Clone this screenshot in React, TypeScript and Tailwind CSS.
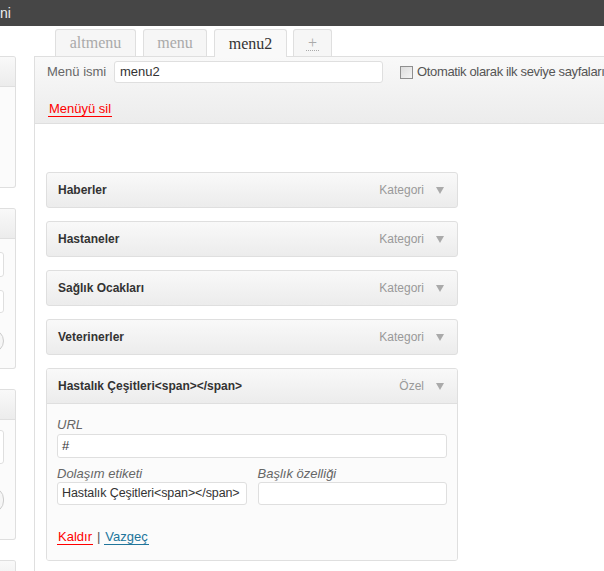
import React from "react";

const sans = { fontFamily: '"Liberation Sans", Arial, sans-serif' };
const serif = { fontFamily: '"Liberation Serif", Georgia, serif' };

const tabs = [
  { label: "altmenu", w: "w-[81px]", active: false },
  { label: "menu", w: "w-[64px]", active: false },
  { label: "menu2", w: "w-[73px]", active: true },
];

const items = ["Haberler", "Hastaneler", "Sağlık Ocakları", "Veterinerler"];

function Arrow() {
  return (
    <svg width="8" height="7" viewBox="0 0 8 7" className="ml-[12px] shrink-0">
      <path d="M0 0h8L4 7z" fill="#aaaaaa" />
    </svg>
  );
}

function ItemRow({ title, type }: { title: string; type: string }) {
  return (
    <div className="h-[36px] mb-[13px] border border-[#dfdfdf] rounded-[3px] bg-gradient-to-b from-[#f9f9f9] to-[#ececec] flex items-center pl-[11px] pr-[13px]">
      <span className="text-[12px] font-bold text-[#333]">{title}</span>
      <span className="ml-auto text-[12px] text-[#999]">{type}</span>
      <Arrow />
    </div>
  );
}

function SidePanel({ h, children }: { h: string; children?: React.ReactNode }) {
  return (
    <div className={`${h} mb-[20px] border-y border-r border-[#dfdfdf] rounded-r-[3px] bg-[#fbfbfb] overflow-hidden`}>
      <div className="h-[30px] border-b border-[#dfdfdf] bg-gradient-to-b from-[#f9f9f9] to-[#ececec]" />
      {children}
    </div>
  );
}

export default function App() {
  return (
    <div className="w-[604px] h-[571px] overflow-hidden bg-white relative" style={sans}>
      {/* admin bar */}
      <div className="h-[26px] bg-[#464646] flex items-center text-[14px] text-[#eeeeee] leading-none">
        <span className="-mt-[1px]">ni</span>
      </div>

      <div className="flex">
        {/* left column, mostly scrolled off */}
        <div className="w-[16px] shrink-0 pt-[30px]">
          <SidePanel h="h-[132px]" />
          <SidePanel h="h-[161px]">
            <div className="pt-[13px] flex flex-col">
              <div className="-ml-[17px] w-[21px] h-[25px] border border-[#dfdfdf] rounded-[3px] bg-white" />
              <div className="mt-[13px] -ml-[17px] w-[21px] h-[23px] border border-[#dfdfdf] rounded-[3px] bg-white" />
              <div className="mt-[16px] -ml-[20px] w-[24px] h-[24px] border border-[#cccccc] rounded-full bg-[#f6f6f6]" />
            </div>
          </SidePanel>
          <SidePanel h="h-[151px]">
            <div className="pt-[10px] flex flex-col">
              <div className="-ml-[17px] w-[21px] h-[34px] border border-[#dfdfdf] rounded-[3px] bg-white" />
              <div className="mt-[23px] -ml-[20px] w-[24px] h-[26px] border border-[#cccccc] rounded-full bg-[#f6f6f6]" />
            </div>
          </SidePanel>
          <SidePanel h="h-[40px]" />
        </div>

        {/* main column */}
        <div className="ml-[18px] flex-1 min-w-0">
          {/* tabs */}
          <div className="h-[30px] flex items-end pl-[21px] gap-[7px]">
            {tabs.map((t) => (
              <div
                key={t.label}
                className={`${t.w} h-[27px] border border-b-0 border-[#dfdfdf] rounded-t-[3px] flex items-center justify-center text-[16px] ${
                  t.active ? "bg-[#f9f9f9] text-[#333] relative z-10 h-[28px] -mb-[1px]" : "bg-[#f6f6f6] text-[#aaa]"
                }`}
                style={serif}
              >
                {t.label}
              </div>
            ))}
            <div className="ml-[-1px] w-[39px] h-[27px] border border-b-0 border-[#dfdfdf] rounded-t-[3px] bg-[#f6f6f6] flex items-center justify-center text-[#aaa] text-[16px]" style={serif}>
              <span className="border-b border-dotted border-[#aaa] leading-[15px] px-[2px]">+</span>
            </div>
          </div>

          {/* menu panel */}
          <div className="border-l border-t border-[#dfdfdf] h-[600px]">
            <div className="h-[67px] border-b border-[#dfdfdf] bg-gradient-to-b from-[#f9f9f9] to-[#ececec] pt-[4px] pl-[12px]">
              <div className="flex items-center whitespace-nowrap">
                <span className="shrink-0 text-[13px] text-[#666] w-[67px]">Menü ismi</span>
                <div className="shrink-0 w-[269px] h-[22px] border border-[#dfdfdf] rounded-[3px] bg-white flex items-center pl-[5px] text-[13px] text-[#333]">
                  menu2
                </div>
                <div className="ml-[17px] w-[13px] h-[13px] border border-[#8f8f8f] bg-gradient-to-br from-[#dcdcdc] to-[#f4f4f4] shrink-0" />
                <span className="shrink-0 ml-[4px] text-[13px] tracking-[-0.35px] text-[#555]">Otomatik olarak ilk seviye sayfaları</span>
              </div>
              <div className="mt-[13px] pl-[1px]">
                <span className="inline-block text-[13px] leading-[15px] text-[#ff0000] border-b border-[#ff0000] px-[1px]">
                  Menüyü sil
                </span>
              </div>
            </div>

            <div className="pt-[48px] pl-[11px] w-[423px]">
              {items.map((it) => (
                <ItemRow key={it} title={it} type="Kategori" />
              ))}

              {/* expanded custom item */}
              <div className="border border-[#dfdfdf] rounded-[3px] overflow-hidden">
                <div className="h-[35px] border-b border-[#dfdfdf] bg-gradient-to-b from-[#f9f9f9] to-[#ececec] flex items-center pl-[11px] pr-[13px]">
                  <span className="text-[12px] font-bold text-[#333]">Hastalık Çeşitleri&lt;span&gt;&lt;/span&gt;</span>
                  <span className="ml-auto text-[12px] text-[#999]">Özel</span>
                  <Arrow />
                </div>
                <div className="bg-[#fbfbfb] px-[10px] pt-[13px] pb-[15px]">
                  <div className="text-[13px] leading-[15px] italic text-[#666]">URL</div>
                  <div className="mt-[2px] h-[24px] border border-[#dfdfdf] rounded-[3px] bg-white flex items-center pl-[4px] text-[13px] text-[#333]">
                    #
                  </div>
                  <div className="mt-[8px] grid grid-cols-2 gap-x-[11px]">
                    <div>
                      <div className="text-[13px] leading-[15px] italic text-[#666]">Dolaşım etiketi</div>
                      <div className="mt-[1px] h-[23px] border border-[#dfdfdf] rounded-[3px] bg-white flex items-center pl-[4px] text-[12.5px] tracking-[-0.1px] text-[#333] whitespace-nowrap">
                        Hastalık Çeşitleri&lt;span&gt;&lt;/span&gt;
                      </div>
                    </div>
                    <div>
                      <div className="text-[13px] leading-[15px] italic text-[#666]">Başlık özelliği</div>
                      <div className="mt-[1px] h-[23px] border border-[#dfdfdf] rounded-[3px] bg-white" />
                    </div>
                  </div>
                  <div className="mt-[24px] flex items-start text-[13px] leading-[15px]">
                    <span className="text-[#ff0000] border-b border-[#ff0000] px-[1px]">Kaldır</span>
                    <span className="mx-[4px] text-[#555]">|</span>
                    <span className="text-[#21759b] border-b border-[#21759b] px-[1px]">Vazgeç</span>
                  </div>
                </div>
              </div>
            </div>
          </div>
        </div>
      </div>
    </div>
  );
}
